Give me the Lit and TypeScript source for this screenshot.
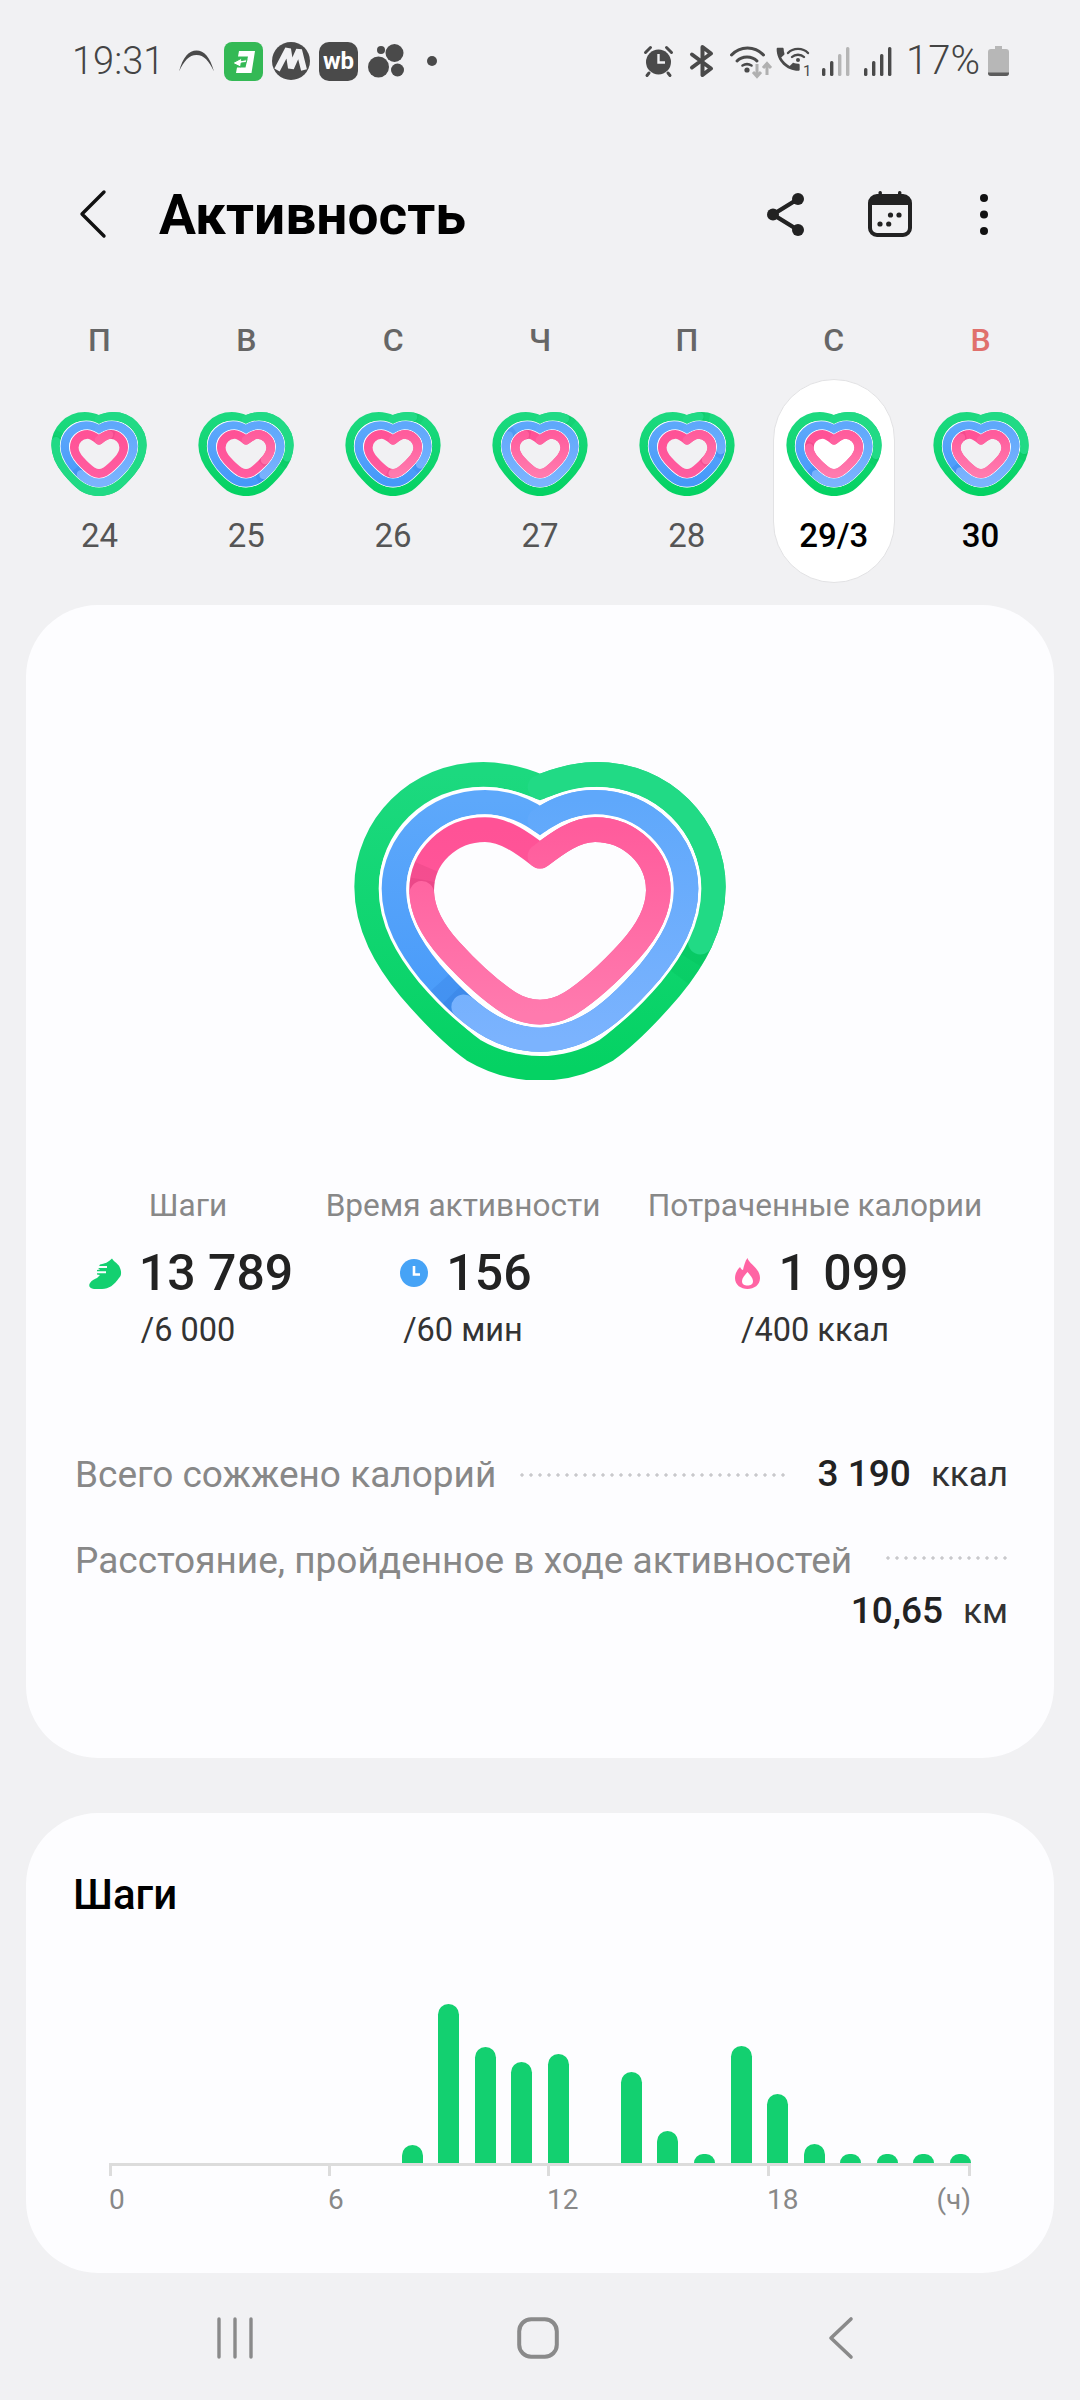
import { LitElement, html, svg, css } from "lit";
import { customElement, property } from "lit/decorators.js";

const GREEN =
  "M630 140 C690 115 745 102 800 102 C1000 102 1150 260 1150 440 C1150 560 1090 660 1020 745 C960 815 900 880 830 930 C770 965 700 985 630 985 C560 985 490 965 430 930 C360 880 300 815 240 745 C170 660 110 560 110 440 C110 260 260 102 460 102 C515 102 570 115 630 140 Z";
const BLUE =
  "M630 240 C680 205 735 186 795 186 C950 186 1068 310 1068 445 C1068 540 1020 620 960 695 C900 765 840 825 775 860 C730 885 680 898 630 898 C580 898 530 885 485 860 C420 825 360 765 300 695 C240 620 192 540 192 445 C192 310 310 186 465 186 C525 186 580 205 630 240 Z";
const PINK =
  "M630 348 C680 310 735 268 795 268 C900 268 985 350 985 450 C985 520 945 580 900 630 C850 685 790 745 720 790 C690 808 660 816 630 816 C600 816 570 808 540 790 C470 745 410 685 360 630 C315 580 275 520 275 450 C275 350 360 268 465 268 C525 268 580 310 630 348 Z";

const LARGE = { g: [1, 74, 74], b: [1, 74, 92], p: [1, 74, 92] };
const COMPACT = { g: [0.968, 104, 104], b: [0.907, 110, 128], p: [0.81, 124, 144] };

@customElement("activity-heart")
export class ActivityHeart extends LitElement {
  @property({ type: Number }) g = 29;
  @property({ type: Number }) b = 60;
  @property({ type: Number }) p = 76;
  @property({ type: Boolean }) compact = false;
  @property() hole = "#fdfdff";

  static styles = css`
    :host { display: block; }
    svg { display: block; width: 100%; height: 100%; }
    path { fill: none; stroke-width: var(--w); }
    .halo { stroke: #fff; stroke-width: var(--h); stroke-linejoin: round; }
    .miter { stroke-linejoin: miter; stroke-miterlimit: 4; }
    .round { stroke-linejoin: round; }
    .head { stroke-linecap: round; stroke-linejoin: round; }
    .g-base { stroke: url(#gb); }
    .b-base { stroke: url(#bb); }
    .p-base { stroke: url(#pb); }
    .g-head { stroke: #21da85; }
    .b-head { stroke: url(#bh); }
    .p-head { stroke: url(#ph); }
    .g-shade { stroke: #02b956; }
    .b-shade { stroke: #2a6fd0; }
    .p-shade { stroke: #c9306f; }
    .shade { opacity: 0.2; }
  `;

  private ring(d: string, key: string, pct: number) {
    const shade = (n: number) => `0 ${pct} ${n} 200`;
    return svg`
      <path class="${key}-shade shade" pathLength="100" d=${d} stroke-dasharray=${shade(2)}></path>
      <path class="${key}-shade shade" pathLength="100" d=${d} stroke-dasharray=${shade(4)}></path>
      <path class="${key}-head head" pathLength="100" d=${d} stroke-dasharray=${`0 0.5 ${pct - 0.5} 200`}></path>
    `;
  }

  private tf(s: number) {
    return `translate(630 543) scale(${s}) translate(-630 -543)`;
  }

  render() {
    const c = this.compact ? COMPACT : LARGE;
    const vars = (r: number[]) => `--w:${r[1]};--h:${r[2]}`;
    return html`<svg viewBox="72 65 1116 955" preserveAspectRatio="none">
      <defs>
        <linearGradient id="gb" gradientUnits="userSpaceOnUse" x1="0" y1="100" x2="0" y2="985">
          <stop offset="0" stop-color="#1cd97f"></stop>
          <stop offset="1" stop-color="#05d263"></stop>
        </linearGradient>
        <linearGradient id="bb" gradientUnits="userSpaceOnUse" x1="0" y1="180" x2="0" y2="900">
          <stop offset="0" stop-color="#5da8fb"></stop>
          <stop offset="1" stop-color="#4699f9"></stop>
        </linearGradient>
        <linearGradient id="pb" gradientUnits="userSpaceOnUse" x1="0" y1="260" x2="0" y2="820">
          <stop offset="0" stop-color="#ff5296"></stop>
          <stop offset="1" stop-color="#ff5c9f"></stop>
        </linearGradient>
        <linearGradient id="bh" gradientUnits="userSpaceOnUse" x1="0" y1="180" x2="0" y2="900">
          <stop offset="0" stop-color="#5fa8fb"></stop>
          <stop offset="1" stop-color="#7bb3fe"></stop>
        </linearGradient>
        <linearGradient id="ph" gradientUnits="userSpaceOnUse" x1="0" y1="260" x2="0" y2="820">
          <stop offset="0" stop-color="#ff5c9c"></stop>
          <stop offset="1" stop-color="#ff7aae"></stop>
        </linearGradient>
      </defs>
      <g transform=${this.tf(c.g[0])} style=${vars(c.g)}>
        <path class="g-base miter" d=${GREEN}></path>
        ${this.ring(GREEN, "g", this.g)}
      </g>
      <g transform=${this.tf(c.b[0])} style=${vars(c.b)}>
        <path class="halo" d=${BLUE}></path>
        <path class="b-base miter" d=${BLUE}></path>
        ${this.ring(BLUE, "b", this.b)}
      </g>
      <g transform=${this.tf(c.p[0])} style=${vars(c.p)}>
        <path class="halo" d=${PINK}></path>
        <path d=${PINK} style=${`fill:${this.hole};stroke:none`}></path>
        <path class="p-base round" d=${PINK}></path>
        ${this.ring(PINK, "p", this.p)}
      </g>
    </svg>`;
  }
}

const DAYS = [
  { l: "П", n: "24", g: 78, b: 60, p: 8 },
  { l: "В", n: "25", g: 28, b: 40, p: 33 },
  { l: "С", n: "26", g: 8, b: 33, p: 50 },
  { l: "Ч", n: "27", g: 10, b: 82, p: 88 },
  { l: "П", n: "28", g: 5, b: 25, p: 33 },
  { l: "С", n: "29/3", g: 27, b: 60, p: 76, sel: true },
  { l: "В", n: "30", g: 25, b: 62, p: 84, sun: true },
];

const BARS = [0, 0, 0, 0, 0, 0, 0, 0, 18, 159, 116, 101, 109, 0, 91, 32, 9, 117, 69, 19, 9, 9, 9, 9];

@customElement("app-root")
export class AppRoot extends LitElement {
  static styles = css`
    :host {
      display: flex;
      flex-direction: column;
      width: 1080px;
      height: 2400px;
      background: #f1f1f3;
      font-family: "Roboto", "Liberation Sans", sans-serif;
      overflow: hidden;
    }
    svg { display: block; flex: none; overflow: visible; }

    .status {
      height: 122px;
      display: flex;
      justify-content: space-between;
      align-items: center;
      padding: 0 71px 0 72px;
      color: #4a4a4a;
      flex: none;
    }
    .cluster { display: flex; align-items: center; }
    .status-text { font-size: 38px; font-weight: 300; line-height: 44px; color: #444; }
    .pct { font-size: 40px; margin-left: 14px; }
    .m4 { margin-left: 4px; }
    .m8 { margin-left: 8px; }
    .m9 { margin-left: 9px; }
    .m10 { margin-left: 10px; }
    .m11 { margin-left: 11px; }
    .m14 { margin-left: 14px; }
    .m15 { margin-left: 15px; }
    .m16 { margin-left: 16px; }
    .m23 { margin-left: 23px; }
    .wb-text { font: 700 24px "Roboto", sans-serif; fill: #fff; }
    .sim { font: 400 15px "Roboto", sans-serif; fill: #4a4a4a; }

    .header {
      height: 184px;
      flex: none;
      display: flex;
      align-items: center;
      padding: 0 92px 0 80px;
    }
    .title {
      margin: 2px 0 0 53px;
      font-size: 55px;
      font-weight: 700;
      color: #000;
      flex: 1;
      line-height: 60px;
    }
    .actions { display: flex; align-items: center; }
    .cal { margin-left: 64px; }
    .more { margin-left: 68px; }

    .week {
      display: grid;
      grid-template-columns: repeat(7, 1fr);
      padding: 17px 26px 0;
      flex: none;
    }
    .day { display: flex; flex-direction: column; align-items: center; }
    .letter {
      font-size: 32px;
      font-weight: 500;
      line-height: 34px;
      color: #666;
      margin-bottom: 22px;
    }
    .sun .letter { color: #e0706c; }
    .pill {
      width: 122px;
      height: 204px;
      box-sizing: border-box;
      padding-top: 32px;
      border-radius: 61px;
      display: flex;
      flex-direction: column;
      align-items: center;
      border: 1px solid transparent;
    }
    .sel .pill { background: #fff; border-color: #e2e2e4; }
    .small { width: 96px; height: 84px; flex: none; }
    .num {
      margin-top: 20px;
      font-size: 33px;
      line-height: 40px;
      color: #555;
    }
    .sel .num, .sun .num { color: #000; font-weight: 500; }

    .card {
      margin: 0 26px;
      background: #fdfdff;
      border-radius: 72px;
      flex: none;
      box-sizing: border-box;
    }
    .main { margin-top: 22px; height: 1153px; padding-top: 157px; }
    .big { width: 372px; height: 318px; margin: 0 auto; }
    .stats {
      display: grid;
      grid-template-columns: 244px 306px 398px;
      padding-left: 40px;
      margin-top: 106px;
    }
    .stat { display: flex; flex-direction: column; align-items: center; }
    .stat-label { font-size: 31.6px; line-height: 40px; color: #888; white-space: nowrap; }
    .stat-value {
      display: flex;
      align-items: center;
      gap: 18px;
      margin: 17px 0 0 6px;
      font-size: 50px;
      font-weight: 500;
      line-height: 60px;
      color: #222;
      white-space: nowrap;
    }
    .stat-value.wide { margin-left: 14px; word-spacing: 4px; }
    .stat-sub { margin-top: 7px; font-size: 32.5px; line-height: 40px; color: #333; white-space: nowrap; }
    .rows { margin: 99px 46px 0 49px; }
    .row {
      display: flex;
      flex-wrap: wrap;
      align-items: center;
      font-size: 37px;
      line-height: 50px;
      color: #888;
    }
    .row + .row { margin-top: 36px; }
    .dots {
      flex: 1 1 100px;
      height: 4px;
      margin: 0 28px 0 24px;
      background: radial-gradient(circle at 2px 2px, #c9c9cc 1.4px, transparent 1.9px) 0 0 / 9px 4px repeat-x;
    }
    .row-b .dots { margin: -6px 0 0 34px; }
    .value { margin-left: auto; color: #222; font-weight: 500; white-space: nowrap; }
    .unit { margin-left: 20px; font-size: 35px; font-weight: 400; color: #333; }

    .steps { margin-top: 55px; height: 460px; padding: 57px 47px 0; }
    .steps-title { font-size: 42px; font-weight: 500; line-height: 50px; color: #000; }
    .chart { margin: 0 36px; }
    .bars {
      height: 243px;
      display: flex;
      align-items: flex-end;
      justify-content: space-between;
    }
    .bar { width: 21px; background: #13d070; border-radius: 10.5px 10.5px 0 0; }
    .axis {
      display: grid;
      grid-template-columns: 219px 219px 220px 204px;
      border-top: 3px solid #dcdcdc;
    }
    .tick { height: 10px; border-left: 3px solid #dcdcdc; }
    .tick.end { border-right: 3px solid #dcdcdc; }
    .labels {
      display: grid;
      grid-template-columns: 219px 219px 220px 204px;
      margin-top: 6px;
      font-size: 28px;
      line-height: 36px;
      color: #888;
    }
    .last { display: flex; justify-content: space-between; }

    .nav {
      flex: 1;
      display: grid;
      grid-template-columns: repeat(3, 303px);
      justify-content: center;
      justify-items: center;
      align-items: center;
      padding: 3px 5px 0 0;
    }
  `;

  private statusLeft() {
    return html`<div class="cluster">
      <span class="status-text">19:31</span>
      <svg class="m15" width="35" height="22" viewBox="0 0 35 22"><path fill="#4a4a4a" d="M0 21.5C4 7 10 .5 17.5 .5S31 7 35 21.5C30 11 25 5 17.5 5S5 11 0 21.5Z"></path></svg>
      <svg class="m10" width="39" height="39" viewBox="0 0 39 39">
        <rect width="39" height="39" rx="8" fill="#34b955"></rect>
        <path fill="#fff" d="M15 9H31L27.5 31H12L13 25.5H21.5L24 14.5H14Z"></path>
        <path fill="#fff" d="M8.5 21L18 16L17.3 18.6L23 17.6L22 20.6L17.2 21L16.6 25Z" stroke="#34b955" stroke-width="1"></path>
      </svg>
      <svg class="m9" width="38" height="38" viewBox="0 0 38 38">
        <circle cx="19" cy="19" r="19" fill="#4a4a4a"></circle>
        <path fill="none" stroke="#f1f1f3" stroke-width="6" stroke-linejoin="bevel" d="M5 28L16 7L19 26L27 8L32 28"></path>
      </svg>
      <svg class="m9" width="39" height="39" viewBox="0 0 39 39">
        <rect width="39" height="39" rx="10" fill="#4a4a4a"></rect>
        <text class="wb-text" x="19.5" y="27" text-anchor="middle">wb</text>
      </svg>
      <svg class="m10" width="36" height="34" viewBox="0 0 36 34" fill="#4a4a4a">
        <circle cx="10.5" cy="23" r="10.5"></circle><circle cx="26.5" cy="9" r="9"></circle>
        <circle cx="13" cy="6" r="4"></circle><circle cx="29.5" cy="26" r="6.5"></circle>
      </svg>
      <svg class="m23" width="10" height="10" viewBox="0 0 10 10"><circle cx="5" cy="5" r="5" fill="#4a4a4a"></circle></svg>
    </div>`;
  }

  private signal(weak: boolean) {
    const c2 = weak ? "#b5b5b5" : "#4a4a4a";
    return html`<svg width="28" height="29" viewBox="0 0 28 29">
      <rect x="0" y="21" width="3.4" height="8" rx="1.5" fill="#4a4a4a"></rect>
      <rect x="8" y="14" width="3.4" height="15" rx="1.5" fill="#4a4a4a"></rect>
      <rect x="16" y="7" width="3.4" height="22" rx="1.5" fill=${c2}></rect>
      <rect x="24" y="0" width="3.4" height="29" rx="1.5" fill=${c2}></rect>
    </svg>`;
  }

  private statusRight() {
    return html`<div class="cluster">
      <svg width="29" height="30" viewBox="0 0 29 30">
        <circle cx="14.5" cy="16" r="12.5" fill="#4a4a4a"></circle>
        <path d="M14.5 8V16.5H21" fill="none" stroke="#f1f1f3" stroke-width="2.4"></path>
        <path d="M1.5 6.5L6.5 1.5M27.5 6.5L22.5 1.5M5 27L3 29.5M24 27L26 29.5" stroke="#4a4a4a" stroke-width="3" stroke-linecap="round" fill="none"></path>
      </svg>
      <svg class="m16" width="27" height="32" viewBox="0 0 27 32">
        <path d="M3 9.5L22 23.5L13.5 30V2L22 8.5L3 22.5" fill="none" stroke="#4a4a4a" stroke-width="4" stroke-linejoin="round" stroke-linecap="round"></path>
      </svg>
      <svg class="m14" width="42" height="31" viewBox="0 0 42 31">
        <g fill="none" stroke="#4a4a4a" stroke-width="3" stroke-linecap="round">
          <path d="M1.5 9C10 -0.5 25 -0.5 33.5 9"></path>
          <path d="M7 15C12 9.5 22 9.5 27 15"></path>
        </g>
        <circle cx="17" cy="24" r="2.6" fill="#4a4a4a"></circle>
        <path d="M12.5 19.5C15 18 19 18 21.5 19.5" fill="none" stroke="#4a4a4a" stroke-width="2.6" stroke-linecap="round"></path>
        <path d="M27 18V30M23 26L27 30.5L31 26M37 29V18M33 22L37 17.5L41 22" fill="none" stroke="#b0b0b0" stroke-width="3"></path>
      </svg>
      <svg class="m4" width="35" height="29" viewBox="0 0 35 29">
        <path fill="#4a4a4a" transform="translate(-3.2 -3.2) scale(1.28)" d="M6.6 10.8c1.4 2.8 3.8 5.1 6.6 6.6l2.2-2.2c.3-.3.7-.4 1-.2 1.1.4 2.3.6 3.6.6.6 0 1 .4 1 1V20c0 .6-.4 1-1 1C10.6 21 3 13.4 3 4c0-.6.4-1 1-1h3.5c.6 0 1 .4 1 1 0 1.2.2 2.4.6 3.6.1.3 0 .7-.2 1z"></path>
        <g fill="none" stroke="#4a4a4a" stroke-width="2.4" stroke-linecap="round">
          <path d="M12 6C17 .5 27 .5 32 6"></path>
          <path d="M16 10C19 7 25 7 28 10"></path>
        </g>
        <circle cx="22" cy="13" r="2" fill="#4a4a4a"></circle>
        <text class="sim" x="27" y="29">1</text>
      </svg>
      <span class="m11">${this.signal(true)}</span>
      <span class="m14">${this.signal(false)}</span>
      <span class="status-text pct">17%</span>
      <svg class="m8" width="21" height="30" viewBox="0 0 21 30">
        <path d="M7 0H14V3H18C20 3 21 4 21 6V27C21 29 20 30 18 30H3C1 30 0 29 0 27V6C0 4 1 3 3 3H7Z" fill="#b7b7b7"></path>
        <path d="M0 26.5H21V27C21 29 20 30 18 30H3C1 30 0 29 0 27Z" fill="#5c5c5c"></path>
      </svg>
    </div>`;
  }

  private header() {
    return html`<div class="header">
      <svg width="26" height="48" viewBox="0 0 26 48">
        <path d="M24 2L2 24L24 46" fill="none" stroke="#111" stroke-width="3.4" stroke-linecap="round" stroke-linejoin="round"></path>
      </svg>
      <h1 class="title">Активность</h1>
      <div class="actions">
        <svg width="37" height="43" viewBox="0 0 37 43" fill="#222">
          <path d="M31 6L6 21.5L31 37" fill="none" stroke="#222" stroke-width="4.4"></path>
          <circle cx="6" cy="21.5" r="6"></circle><circle cx="31" cy="6" r="6"></circle><circle cx="31" cy="37" r="6"></circle>
        </svg>
        <svg class="cal" width="44" height="46" viewBox="0 0 44 46" fill="#222">
          <rect x="2" y="5" width="40" height="39" rx="7" fill="none" stroke="#222" stroke-width="4"></rect>
          <path d="M2 14V11C2 7 4 5 8 5H36C40 5 42 7 42 11V14Z"></path>
          <rect x="10.5" y="0" width="3.4" height="8" rx="1.5"></rect><rect x="30" y="0" width="3.4" height="8" rx="1.5"></rect>
          <circle cx="22.5" cy="24" r="2.6"></circle><circle cx="31" cy="24" r="2.6"></circle>
          <circle cx="12" cy="33" r="2.6"></circle><circle cx="20.7" cy="33" r="2.6"></circle>
        </svg>
        <svg class="more" width="8" height="41" viewBox="0 0 8 41" fill="#111">
          <circle cx="4" cy="4" r="4"></circle><circle cx="4" cy="20.5" r="4"></circle><circle cx="4" cy="37" r="4"></circle>
        </svg>
      </div>
    </div>`;
  }

  private week() {
    return html`<div class="week">
      ${DAYS.map(
        (d) => html`<div class="day ${d.sel ? "sel" : ""} ${d.sun ? "sun" : ""}">
          <div class="letter">${d.l}</div>
          <div class="pill">
            <activity-heart class="small" compact .g=${d.g} .b=${d.b} .p=${d.p} .hole=${d.sel ? "#ffffff" : "#f1f1f3"}></activity-heart>
            <div class="num">${d.n}</div>
          </div>
        </div>`
      )}
    </div>`;
  }

  private mainCard() {
    return html`<section class="card main">
      <activity-heart class="big"></activity-heart>
      <div class="stats">
        <div class="stat">
          <div class="stat-label">Шаги</div>
          <div class="stat-value">
            <svg width="32" height="31" viewBox="0 0 32 31">
              <path fill="#13d070" d="M23 .5C25 4 30 6 31 10C33 15 32 18 30 20C25 27 20 31 13 31H5C1 31-1 28 1 25C3 22 6 21 8 20L11 17L8 16.5V12L11 11.5L9 10L11 6.5C15 6 20 4 23 .5Z"></path>
              <path d="M7 14.2H17M8 9H18" stroke="#fdfdff" stroke-width="2" fill="none"></path>
            </svg>
            <span>13 789</span>
          </div>
          <div class="stat-sub">/6 000</div>
        </div>
        <div class="stat">
          <div class="stat-label">Время активности</div>
          <div class="stat-value">
            <svg width="28" height="28" viewBox="0 0 28 28"><circle cx="14" cy="14" r="14" fill="#46a3f6"></circle><path d="M14 7V15.5H20" fill="none" stroke="#fff" stroke-width="2.6"></path></svg>
            <span>156</span>
          </div>
          <div class="stat-sub">/60 мин</div>
        </div>
        <div class="stat">
          <div class="stat-label">Потраченные калории</div>
          <div class="stat-value wide">
            <svg width="25" height="31" viewBox="0 0 25 31"><path fill="#ff64a4" d="M12.5 0C14 6 25 10 25 20C25 27 19 31 12.5 31C6 31 0 27 0 20C0 15 3 11 5 9C6 11 7 12 8 12C9 8 10 3 12.5 0Z"></path><path fill="#fff" d="M12.5 14C15 17 18 20 18 23C18 26.5 15.5 27.5 12.5 27.5C9.5 27.5 7 26.5 7 23C7 20 10 17 12.5 14Z"></path></svg>
            <span>1 099</span>
          </div>
          <div class="stat-sub">/400 ккал</div>
        </div>
      </div>
      <div class="rows">
        <div class="row">
          <span>Всего сожжено калорий</span>
          <span class="dots"></span>
          <span class="value">3 190<span class="unit">ккал</span></span>
        </div>
        <div class="row row-b">
          <span>Расстояние, пройденное в ходе активностей</span>
          <span class="dots"></span>
          <span class="value">10,65<span class="unit">км</span></span>
        </div>
      </div>
    </section>`;
  }

  private stepsCard() {
    return html`<section class="card steps">
      <div class="steps-title">Шаги</div>
      <div class="chart">
        <div class="bars">${BARS.map((h) => html`<div class="bar" style=${`height:${h}px`}></div>`)}</div>
        <div class="axis">
          <div class="tick"></div><div class="tick"></div><div class="tick"></div><div class="tick end"></div>
        </div>
        <div class="labels"><span>0</span><span>6</span><span>12</span><div class="last"><span>18</span><span>(ч)</span></div></div>
      </div>
    </section>`;
  }

  private nav() {
    return html`<nav class="nav">
      <svg width="36" height="42" viewBox="0 0 36 42" fill="none" stroke="#8a8a8a" stroke-width="3.4" stroke-linecap="round">
        <path d="M2 2V40M18 2V40M34 2V40"></path>
      </svg>
      <svg width="42" height="42" viewBox="0 0 42 42"><rect x="2.2" y="2.2" width="37.6" height="37.6" rx="12" fill="none" stroke="#8a8a8a" stroke-width="4"></rect></svg>
      <svg width="24" height="42" viewBox="0 0 24 42"><path d="M22 2L2 21L22 40" fill="none" stroke="#8a8a8a" stroke-width="3.6" stroke-linecap="round" stroke-linejoin="round"></path></svg>
    </nav>`;
  }

  render() {
    return html`
      <div class="status">${this.statusLeft()}${this.statusRight()}</div>
      ${this.header()} ${this.week()} ${this.mainCard()} ${this.stepsCard()} ${this.nav()}
    `;
  }
}
